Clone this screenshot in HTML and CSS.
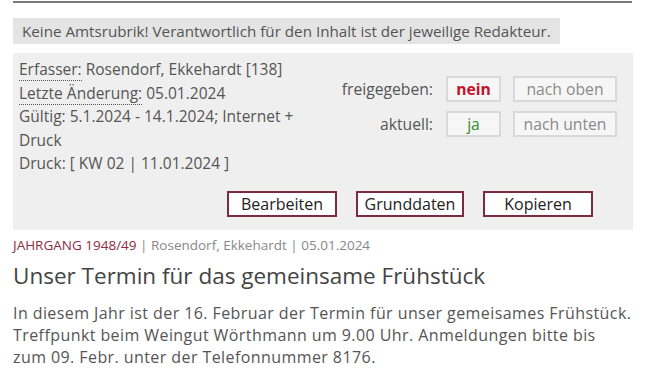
FILE: index.html
```html
<!DOCTYPE html>
<html lang="de">
<head>
<meta charset="utf-8">
<title>Artikel</title>
<link rel="stylesheet" href="styles.css">
</head>
<body>
<div class="page">
  <div class="rule"></div>
  <div class="notice">Keine Amtsrubrik! Verantwortlich für den Inhalt ist der jeweilige Redakteur.</div>
  <div class="box">
    <div class="box-top">
      <div class="info">
        <div><abbr class="dot">Erfasser:</abbr> Rosendorf, Ekkehardt [138]</div>
        <div><abbr class="dot">Letzte Änderung:</abbr> 05.01.2024</div>
        <div>Gültig: 5.1.2024 - 14.1.2024; Internet + Druck</div>
        <div>Druck: [ KW 02 | 11.01.2024 ]</div>
      </div>
      <div class="status">
        <div class="status-row">
          <span class="label">freigegeben:</span>
          <span class="flag no">nein</span>
          <span class="move">nach oben</span>
        </div>
        <div class="status-row">
          <span class="label">aktuell:</span>
          <span class="flag yes">ja</span>
          <span class="move">nach unten</span>
        </div>
      </div>
    </div>
    <div class="actions">
      <button class="btn">Bearbeiten</button>
      <button class="btn btn-mid">Grunddaten</button>
      <button class="btn">Kopieren</button>
    </div>
  </div>
  <div class="meta"><span class="rubric">JAHRGANG 1948/49</span> | Rosendorf, Ekkehardt | 05.01.2024</div>
  <h1 class="title">Unser Termin für das gemeinsame Frühstück</h1>
  <p class="text">In diesem Jahr ist der 16. Februar der Termin für unser gemeisames Frühstück. Treffpunkt beim Weingut Wörthmann um 9.00 Uhr. Anmeldungen bitte bis zum 09. Febr. unter der Telefonnummer 8176.</p>
</div>
</body>
</html>
```
FILE: styles.css
```css
* { box-sizing: border-box; }
html, body { margin: 0; padding: 0; background: #fff; }
body {
  font-family: "Open Sans", "DejaVu Sans", sans-serif;
  color: #555;
}
.page {
  width: 620px;
  margin-left: 13px;
  padding-top: 1px;
}
.rule {
  height: 2px;
  background: #7a7a7a;
  width: 619px;
}
.notice {
  display: inline-block;
  margin-top: 15px;
  background: #e4e4e4;
  height: 26px;
  line-height: 26px;
  padding: 0 9px;
  font-size: 15.2px;
  color: #555;
}
.box {
  margin-top: 9px;
  background: #efefef;
  padding: 5px 6px 13px;
}
.box-top {
  display: flex;
}
.info {
  width: 304px;
  font-size: 15.5px;
  line-height: 23.5px;
  color: #555;
}
.dot {
  text-decoration: none;
  border-bottom: 1px dotted #555;
}
.status {
  flex: 1;
  padding-top: 18px;
  display: flex;
  flex-direction: column;
  gap: 9px;
}
.status-row {
  display: flex;
  align-items: center;
  justify-content: flex-end;
  padding-right: 10px;
}
.label {
  font-size: 15.7px;
  color: #555;
  margin-right: 13px;
}
.flag, .move {
  height: 26px;
  line-height: 22px;
  border: 2px solid #d9d9d9;
  background: #f6f6f6;
  text-align: center;
  font-size: 15.7px;
}
.flag { width: 55px; margin-right: 12px; }
.move { width: 104px; color: #8a8a8a; }
.no { color: #c4122a; font-weight: 700; }
.yes { color: #2f8a2f; }
.actions {
  display: flex;
  justify-content: flex-end;
  gap: 19px;
  margin-top: 15px;
  padding-right: 34px;
}
.btn {
  width: 110px;
  height: 26px;
  border: 2px solid #7b2a40;
  background: #fff;
  font-family: "Open Sans", "DejaVu Sans", sans-serif;
  font-size: 16px;
  color: #222;
  padding: 0;
  line-height: 20px;
}
.btn-mid { width: 108px; }
.meta {
  margin-top: 6px;
  font-size: 13.5px;
  color: #888;
}
.rubric { color: #8b2b45; }
.title {
  margin: 7px 0 0;
  font-size: 22.5px;
  font-weight: 400;
  color: #444;
  line-height: 30px;
}
.text {
  margin: 11px 0 0;
  font-size: 16px;
  letter-spacing: 0.42px;
  line-height: 22px;
  color: #555;
}
```
